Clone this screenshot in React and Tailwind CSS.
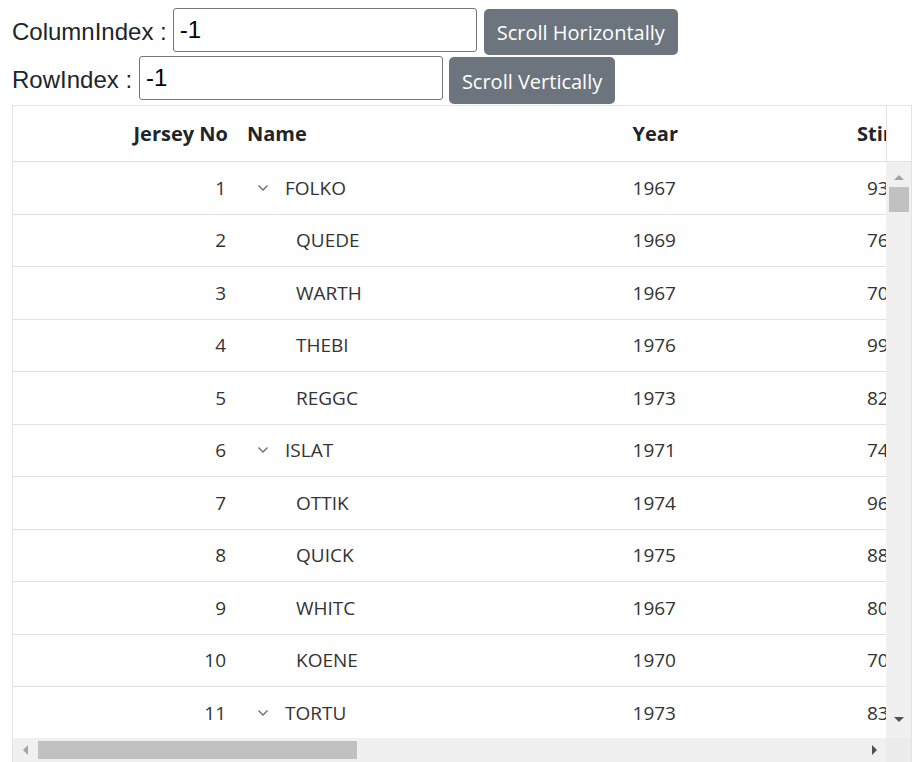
const rows = [
  { id: 1, name: "FOLKO", year: 1967, stint: 93, parent: true },
  { id: 2, name: "QUEDE", year: 1969, stint: 76 },
  { id: 3, name: "WARTH", year: 1967, stint: 70 },
  { id: 4, name: "THEBI", year: 1976, stint: 99 },
  { id: 5, name: "REGGC", year: 1973, stint: 82 },
  { id: 6, name: "ISLAT", year: 1971, stint: 74, parent: true },
  { id: 7, name: "OTTIK", year: 1974, stint: 96 },
  { id: 8, name: "QUICK", year: 1975, stint: 88 },
  { id: 9, name: "WHITC", year: 1967, stint: 80 },
  { id: 10, name: "KOENE", year: 1970, stint: 70 },
  { id: 11, name: "TORTU", year: 1973, stint: 83, parent: true },
];

const Chevron = () => (
  <svg width="12" height="8" viewBox="0 0 12 8" className="shrink-0">
    <polyline points="1.5,1.5 6,6 10.5,1.5" fill="none" stroke="#6b6b6b" strokeWidth="1.3" />
  </svg>
);

const Tri = ({ dir, color }) => {
  const pts = {
    up: "1,8 6,3 11,8",
    down: "1,3 6,8 11,3",
    left: "8,1 3,6 8,11",
    right: "4,1 9,6 4,11",
  }[dir];
  return (
    <svg width="12" height="12" viewBox="0 0 12 12">
      <polygon points={pts} fill={color} />
    </svg>
  );
};

const App = () => {
  return (
    <div className="pt-[8px] text-[#212529]">
      {/* controls */}
      <div className="flex items-start pl-[12px] h-[48px]">
        <label className="font-['Liberation_Sans',Arial,sans-serif] text-[24px] leading-[48px] mr-[6px]">
          ColumnIndex :
        </label>
        <input
          defaultValue="-1"
          className="w-[304px] h-[44px] border border-[#767676] rounded-[3px] px-[6px] font-['Liberation_Sans',Arial,sans-serif] text-[24px] text-black outline-none"
        />
        <button className="ml-[7px] mt-[1px] h-[46px] w-[194px] bg-[#6c757d] rounded-[5px] text-white font-['Open_Sans',sans-serif] text-[20px] pt-[2px]">
          Scroll Horizontally
        </button>
      </div>
      <div className="flex items-start pl-[12px] h-[49px]">
        <label className="font-['Liberation_Sans',Arial,sans-serif] text-[24px] leading-[48px] mr-[7px]">
          RowIndex :
        </label>
        <input
          defaultValue="-1"
          className="w-[304px] h-[44px] border border-[#767676] rounded-[3px] px-[6px] font-['Liberation_Sans',Arial,sans-serif] text-[24px] text-black outline-none"
        />
        <button className="ml-[6px] mt-[1px] h-[47px] w-[166px] bg-[#6c757d] rounded-[5px] text-white font-['Open_Sans',sans-serif] text-[20px] pt-[2px]">
          Scroll Vertically
        </button>
      </div>

      {/* grid */}
      <div className="ml-[12px] w-[900px] border border-[#e3e3e3] font-['Open_Sans',sans-serif]">
        {/* header */}
        <div className="flex h-[56px] border-b border-[#dee2e6]">
          <div className="w-[873px] overflow-hidden">
            <div className="flex w-[960px] h-full items-center text-[20px] font-bold text-[#212529]">
              <div className="w-[225px] text-right pr-[10px]">Jersey No</div>
              <div className="w-[250px] pl-[9px]">Name</div>
              <div className="w-[200px] text-right pr-[10px]">Year</div>
              <div className="pl-[169px]">Stint</div>
            </div>
          </div>
          <div className="w-[25px] border-l border-[#dee2e6]" />
        </div>

        {/* body */}
        <div className="flex h-[576px]">
          <div className="w-[873px] overflow-hidden">
            <div className="w-[960px] text-[19px] text-[#333]">
              {rows.map((r) => (
                <div key={r.id} className="flex items-center h-[52.5px] border-b border-[#dee2e6]">
                  <div className="w-[225px] text-right pr-[12px]">{r.id}</div>
                  <div className="w-[250px] flex items-center">
                    {r.parent ? (
                      <>
                        <span className="ml-[19px] mr-[16px] flex">
                          <Chevron />
                        </span>
                        <span>{r.name}</span>
                      </>
                    ) : (
                      <span className="ml-[58px]">{r.name}</span>
                    )}
                  </div>
                  <div className="w-[200px] text-right pr-[12px]">{r.year}</div>
                  <div className="pl-[179px]">{r.stint}</div>
                </div>
              ))}
            </div>
          </div>
          {/* vertical scrollbar */}
          <div className="w-[25px] bg-[#f0f0f0] flex flex-col items-center">
            <div className="h-[22px] flex items-end justify-center">
              <Tri dir="up" color="#a3a3a3" />
            </div>
            <div className="mt-[3px] w-[20px] h-[25px] bg-[#c1c1c1]" />
            <div className="flex-1" />
            <div className="h-[22px] flex items-start justify-center mb-[2px]">
              <Tri dir="down" color="#505050" />
            </div>
          </div>
        </div>

        {/* horizontal scrollbar */}
        <div className="flex h-[24px]">
          <div className="w-[873px] bg-[#f0f0f0] flex items-center">
            <div className="w-[25px] flex justify-center">
              <Tri dir="left" color="#a3a3a3" />
            </div>
            <div className="w-[319px] h-[18px] bg-[#c1c1c1]" />
            <div className="flex-1" />
            <div className="w-[25px] flex justify-center">
              <Tri dir="right" color="#505050" />
            </div>
          </div>
          <div className="w-[25px] bg-[#ececec]" />
        </div>
      </div>
    </div>
  );
};

export default App;
